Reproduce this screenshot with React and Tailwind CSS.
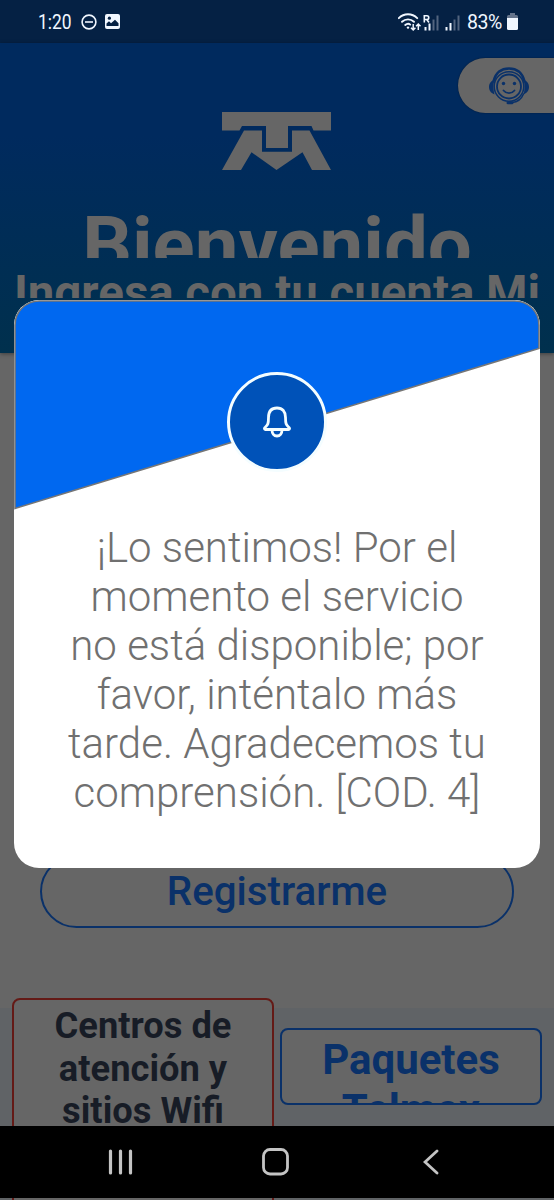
function StatusBar() {
  return (
    <div className="flex h-[43px] shrink-0 items-center justify-between bg-[#052144] pl-[38px] pr-9 text-[#f1f7ff]">
      <div className="flex items-center">
        <span className="w-[35px] origin-left scale-x-[0.83] whitespace-nowrap text-[21px] leading-5">1:20</span>
        <svg className="ml-2 h-4 w-4" viewBox="0 0 16 16" fill="none" stroke="currentColor" strokeWidth="1.6">
          <circle cx="8" cy="8" r="6.9" />
          <path d="M4 8h8" />
        </svg>
        <svg className="ml-2 h-[15px] w-[15px]" viewBox="0 0 15 15">
          <rect width="15" height="15" rx="2" fill="currentColor" />
          <path d="M1.5 12V9.5L4 7.2l2 2L10 5.8l3.5 3.5V12Z" fill="#052144" />
          <circle cx="4.4" cy="4.2" r="1.6" fill="#052144" />
        </svg>
      </div>
      <div className="flex items-center">
        <svg className="h-5 w-[64px]" viewBox="0 0 64 20" fill="none" stroke="currentColor">
          <g strokeWidth="1.9" strokeLinecap="round">
            <path d="M0.800 6.200C6 1 14 1 19.200 6.200" />
            <path d="M4 9.800C7.500 6.500 12.500 6.500 16 9.800" />
            <path d="M7.200 13C9 11.500 11 11.500 12.200 12.600" />
          </g>
          <circle cx="10" cy="15.600" r="1.200" fill="currentColor" stroke="none" />
          <g strokeWidth="1.500">
            <path d="M15.200 12v6M13 15.800l2.200 2.200 2.200-2.200M20.300 18v-6M18.100 14.200l2.200-2.200 2.200 2.200" />
          </g>
          <g strokeWidth="2">
            <path d="M27.500 15v3.500M31.500 11.500v7M48.500 15v3.500M52.500 11v7.500" />
            <path d="M35.500 7.500v11M39.500 3.500v15M56.500 7.500v11M60.500 3.500v15" stroke="#53657f" />
          </g>
          <path d="M26.300 10.500V3.800h2.600a1.800 1.800 0 0 1 0 3.700h-2.600M28.700 7.500L31 10.500" strokeWidth="1.600" />
        </svg>
        <span className="ml-[5px] w-9 origin-left scale-x-[0.93] whitespace-nowrap text-[21px] leading-5 tracking-[-0.5px]">83%</span>
        <svg className="ml-1 h-[17px] w-[11px]" viewBox="0 0 11 17">
          <path d="M3 0h5v2h1.500A1.500 1.500 0 0 1 11 3.500V6H0V3.500A1.500 1.500 0 0 1 1.500 2H3Z" fill="#65748c" />
          <path d="M0 5h11v10.500a1.500 1.500 0 0 1-1.500 1.500h-8A1.500 1.500 0 0 1 0 15.500Z" fill="currentColor" />
        </svg>
      </div>
    </div>
  );
}

function SupportIcon() {
  return (
    <svg className="h-[38px] w-[42px]" viewBox="0 0 42 38" fill="none" stroke="#0a3169" strokeLinecap="round">
      <path d="M5.500 14C8 5 14 1.500 21 1.500S34 5 36.500 14" strokeWidth="2.400" />
      <circle cx="21" cy="19.500" r="14.800" strokeWidth="1.500" />
      <circle cx="21" cy="19.500" r="12" strokeWidth="1.800" />
      <path d="M6.500 13C2.500 14 1 17 1 20s1.500 6 5.500 7.500C5 22 5 18 6.500 13ZM35.500 13c4 1 5.500 4 5.500 7s-1.500 6-5.500 7.500C37 22 37 18 35.500 13Z" fill="#0a3169" stroke="none" />
      <path d="M35.500 27C33.500 32 30 35 24 35.500" strokeWidth="1.500" />
      <path d="M20 35.800h4" strokeWidth="3" />
      <path d="M15.500 23.500c2.800 3.500 8.200 3.500 11 0" strokeWidth="1.700" />
      <circle cx="15.500" cy="16.500" r="1.700" fill="#0a3169" stroke="none" />
      <circle cx="26.500" cy="16.500" r="1.700" fill="#0a3169" stroke="none" />
    </svg>
  );
}

function Header() {
  return (
    <header className="flex h-[310px] shrink-0 flex-col items-center bg-linear-to-b from-[#002a5e] from-30% to-[#00304d] shadow-[0_1px_4px_rgba(0,0,0,0.4)]">
      <div className="mt-[15px] flex h-[55px] w-[96px] items-center self-end rounded-l-full bg-[#666] pl-[30px] shadow-[0_0_2px_rgba(0,0,0,0.4)]">
        <SupportIcon />
      </div>
      <svg className="mt-[-1px] h-[58px] w-[110px] shrink-0" viewBox="0 0 110 58" fill="#666">
        <path d="M0 0H109V18.500H91.500L89.500 14H66V36H44V14H20L17.500 18.500H0Z" />
        <path d="M22 18.500H40V39.800H70V18.500H87.500L109 58H90L80.500 40.200L54.500 58L29.500 40.200L19 58H0Z" />
      </svg>
      <div className="mt-[30px] flex h-[58px] w-full justify-center overflow-hidden">
        <h1 className="whitespace-nowrap text-[78px] font-bold leading-[92px] text-[#666]">Bienvenido</h1>
      </div>
      <div className="mt-[5px] flex h-[35px] w-full justify-center overflow-hidden">
        <h2 className="whitespace-nowrap text-[47.400px] font-bold leading-[61px] text-[#666]">Ingresa con tu cuenta Mi</h2>
      </div>
    </header>
  );
}

function AlertModal() {
  return (
    <div className="absolute left-[14px] top-[300px] flex h-[568px] w-[526px] flex-col items-center overflow-hidden rounded-[25px] bg-white">
      <div className="relative flex h-[210px] w-full shrink-0 justify-center">
        <svg className="absolute inset-0 h-full w-full" viewBox="0 0 526 210">
          <path d="M1 208.500V25A24 24 0 0 1 25 1H501A24 24 0 0 1 525 25V48.500Z" fill="#0068f0" stroke="#767676" strokeWidth="1.600" />
        </svg>
        <div className="relative mt-[72px] flex h-[100px] w-[100px] items-center justify-center rounded-full border-[3px] border-[#f4fdff] bg-[#0052b8]">
          <svg className="h-[32px] w-[28px]" viewBox="0 0 28 32" fill="none" stroke="#f4fdff" strokeWidth="2.800" strokeLinejoin="round">
            <path d="M5.500 11.500C5.500 5.500 8.500 2 14 2s8.500 3.500 8.500 9.500c0 6 .5 7.500 3.500 10 1 1 .5 2-.5 2h-23c-1 0-1.500-1-.5-2 3-2.500 3.500-4 3.500-10Z" />
            <path d="M9 24c0 3.500 2 6 5 6s5-2.500 5-6" />
          </svg>
        </div>
      </div>
      <p className="mt-[12.500px] w-[430px] whitespace-nowrap text-center text-[42px] font-light leading-[49.100px] text-[#707070]">
        ¡Lo sentimos! Por el<br />momento el servicio<br />no está disponible; por<br />favor, inténtalo más<br />tarde. Agradecemos tu<br />comprensión. [COD. 4]
      </p>
    </div>
  );
}

function NavBar() {
  return (
    <nav className="absolute bottom-[2px] left-0 flex h-[72px] w-full items-center bg-black pl-[108px] text-[#c4c4c4]">
      <svg className="h-[26px] w-[26px]" viewBox="0 0 26 26" stroke="currentColor" strokeWidth="3.200" strokeLinecap="round">
        <path d="M2.500 2v22M12.500 2v22M22.500 2v22" />
      </svg>
      <svg className="ml-[128px] h-[28px] w-[28px]" viewBox="0 0 28 28" fill="none" stroke="currentColor" strokeWidth="2.800">
        <rect x="1.500" y="1.500" width="24" height="24.500" rx="6.500" />
      </svg>
      <svg className="ml-[133px] h-[26px] w-4" viewBox="0 0 16 26" fill="none" stroke="currentColor" strokeWidth="2.800" strokeLinecap="round">
        <path d="M14 2L2 13L14 24" />
      </svg>
    </nav>
  );
}

export default function App() {
  return (
    <div className="relative flex h-[1200px] w-[554px] flex-col overflow-hidden bg-[#666] font-['Roboto',sans-serif]">
      <StatusBar />
      <Header />
      <main className="flex grow flex-col">
        <button className="ml-10 mt-[502px] flex h-[73px] w-[474px] shrink-0 items-center justify-center rounded-full border-2 border-[#0a3169] text-[40.300px] font-medium leading-[44px] text-[#0a3169]">
          Registrarme
        </button>
        <div className="mt-20 flex h-[192px] shrink-0 items-start bg-[#606366] pl-3">
          <button className="mt-[-10px] h-[210px] w-[262px] shrink-0 rounded-lg border-2 border-[#641a16] bg-[#666] pt-[2px] text-center text-[36.300px] font-bold leading-[42.500px] text-[#171c26]">
            <span className="block h-[198px]">Centros de<br />atención y<br />sitios Wifi</span>
          </button>
          <button className="ml-[6px] mt-5 flex h-[77px] w-[262px] shrink-0 items-start justify-center overflow-hidden rounded-lg border-2 border-[#0a3169] bg-[#666] pt-[4.500px] text-[42px] font-bold leading-[50px] text-[#0a3169]">
            <span>Paquetes<br />Telmex</span>
          </button>
        </div>
      </main>
      <AlertModal />
      <NavBar />
    </div>
  );
}
